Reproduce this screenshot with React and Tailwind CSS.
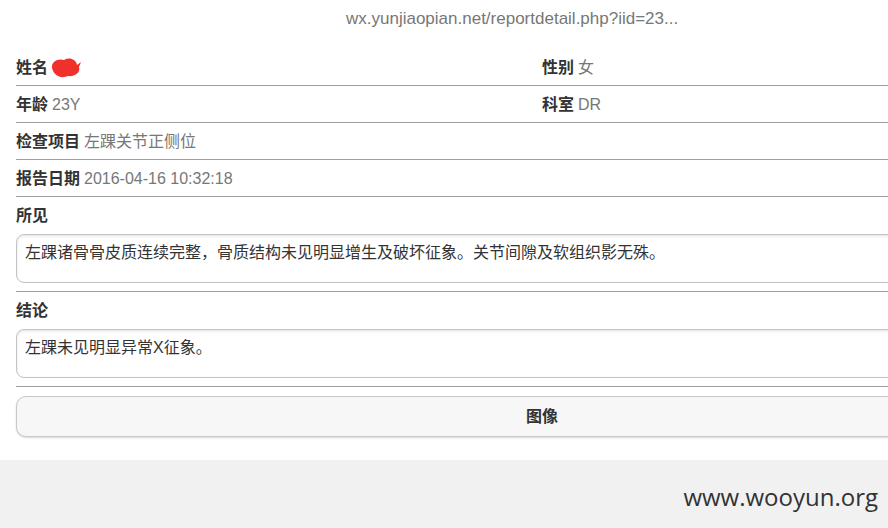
const font = { fontFamily: '"Liberation Sans", "Noto Sans CJK SC", sans-serif' };

function Field({ label, value }) {
  return (
    <div className="flex items-center">
      <span className="font-bold text-[#333]">{label}</span>
      <span className="ml-1 text-[#777]">{value}</span>
    </div>
  );
}

function Row({ children }) {
  return (
    <div className="h-[37px] flex items-center border-b border-[#9f9f9f] pt-[1px]">
      {children}
    </div>
  );
}

function TextBox({ text }) {
  return (
    <div className="h-[49px] rounded-[8px] border border-[#c4c4c4] bg-white px-2 pt-[6px] text-[16px] text-[#333] shadow-[inset_0_1px_3px_rgba(0,0,0,0.12)]">
      {text}
    </div>
  );
}

export default function App() {
  return (
    <div className="w-[888px] h-[528px] overflow-hidden bg-white flex flex-col text-[16px]" style={font}>
      <div className="h-[49px] pt-[6px] pl-[346px] text-[#777] text-[17px]">
        wx.yunjiaopian.net/reportdetail.php?iid=23...
      </div>

      <div className="pl-4">
        <div className="w-[1052px]">
          <Row>
            <div className="grid grid-cols-2 w-full">
              <div className="flex items-center">
                <span className="font-bold text-[#333]">姓名</span>
                <svg width="32" height="22" viewBox="0 0 32 22" className="ml-[2px]">
                  <path d="M2 11 C1 4 9 1 14 3 C19 0 26 2 27 8 L31 5 L29 10 C31 15 25 20 18 19 C11 22 4 19 2 11 Z" fill="#f0302a" />
                </svg>
              </div>
              <Field label="性别" value="女" />
            </div>
          </Row>
          <Row>
            <div className="grid grid-cols-2 w-full">
              <Field label="年龄" value="23Y" />
              <Field label="科室" value="DR" />
            </div>
          </Row>
          <Row>
            <Field label="检查项目" value="左踝关节正侧位" />
          </Row>
          <Row>
            <Field label="报告日期" value="2016-04-16 10:32:18" />
          </Row>

          <div className="border-b border-[#9f9f9f] pb-[8px]">
            <div className="h-[37px] flex items-center font-bold text-[#333]">所见</div>
            <TextBox text="左踝诸骨骨皮质连续完整，骨质结构未见明显增生及破坏征象。关节间隙及软组织影无殊。" />
          </div>

          <div className="border-b border-[#9f9f9f] pb-[8px]">
            <div className="h-[37px] flex items-center font-bold text-[#333]">结论</div>
            <TextBox text="左踝未见明显异常X征象。" />
          </div>

          <button className="mt-[9px] w-full h-[41px] rounded-[10px] border border-[#c8c8c8] bg-[#f7f7f7] font-bold text-[#333] shadow-[0_1px_2px_rgba(0,0,0,0.15)]">
            图像
          </button>
        </div>
      </div>

      <div className="mt-auto h-[68px] bg-[#f1f1f1] flex items-center justify-end pr-[10px] pt-[6px]">
        <span className="text-[24px] text-[#333]" style={{ fontFamily: '"Open Sans", sans-serif' }}>
          www.wooyun.org
        </span>
      </div>
    </div>
  );
}
